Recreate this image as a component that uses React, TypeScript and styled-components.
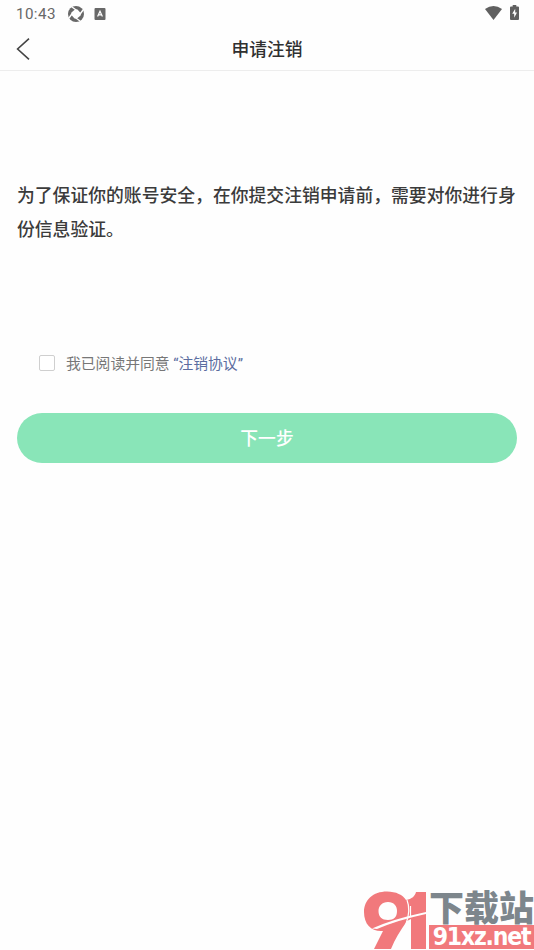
import React from "react";
import styled, { createGlobalStyle } from "styled-components";

const Global = createGlobalStyle`
  * { box-sizing: border-box; }
  body { margin: 0; background: #fefefe; font-family: Roboto, "Noto Sans CJK SC", sans-serif; }
`;
const Screen = styled.main`
  position: relative; display: flex; flex-direction: column;
  width: 534px; height: 950px; overflow: hidden; background: #fefefe;
`;
const StatusBar = styled.header`
  display: flex; align-items: center; height: 27px; padding: 0 15px 0 16px; color: #686868;
`;
const Clock = styled.time`
  width: 52px; font-size: 15.2px; letter-spacing: 0.4px; line-height: 27px; padding-top: 1px;
`;
const StatusIcons = styled.div`
  display: flex; align-items: center; gap: 10px; flex: 1;
`;
const DeviceIcons = styled.div`
  display: flex; align-items: center; gap: 8px; padding-bottom: 2px;
`;
const NavBar = styled.nav`
  display: grid; grid-template-columns: 60px 1fr 60px; align-items: center;
  height: 44px; border-bottom: 1px solid #ededed;
`;
const BackButton = styled.button`
  display: flex; padding: 0 0 0 16px; border: 0; background: none;
`;
const Title = styled.h1`
  margin: 0; padding-top: 2px; text-align: center; font-size: 17.8px; line-height: 26px; font-weight: 500; color: #303030;
`;
const Content = styled.section`
  display: flex; flex-direction: column; padding: 108px 17px 0;
`;
const Notice = styled.p`
  margin: 0; width: 502px; font-size: 17.82px; line-height: 34px; font-weight: 500; color: #3b3b3b;
`;
const Agreement = styled.label`
  display: flex; align-items: center; height: 24px; margin: 103px 0 0 22px;
  font-size: 14.8px; color: #777; white-space: pre;
`;
const Checkbox = styled.input`
  appearance: none; width: 16px; height: 16px; margin: 1px 11px 0 0;
  border: 1px solid #cfcfcf; border-radius: 2px; background: #fff;
`;
const Link = styled.a`color: #5b6da0;`;
const NextButton = styled.button`
  height: 50px; width: 500px; margin-top: 39px; padding: 0 0 2px; border: 0; border-radius: 25px;
  background: #89e5b8; color: #fff; font: 500 17.8px Roboto, "Noto Sans CJK SC", sans-serif;
`;
const Watermark = styled.div`
  position: absolute; left: 360px; top: 886px; display: flex; width: 174px; height: 64px;
`;
const SiteLabel = styled.div`
  display: flex; flex-direction: column; width: 105px; margin-left: 3px;
`;
const SiteName = styled.span`
  height: 39px; padding-top: 2px; white-space: nowrap; color: #7d868c;
  font: 900 35px/35px "Noto Sans CJK SC", sans-serif;
`;
const SiteAddress = styled.span`
  display: flex; align-items: center; justify-content: center; height: 24px;
  background: #f1797c; color: #fff;
  font: 700 24.5px/24px "DejaVu Sans Condensed", "DejaVu Sans", sans-serif;
  font-stretch: condensed; letter-spacing: -1.2px; white-space: nowrap;
`;

export default function App() {
  return (
    <Screen>
      <Global />
      <StatusBar>
        <Clock>10:43</Clock>
        <StatusIcons>
          <svg width="16" height="16" viewBox="0 0 16 16">
            <circle cx="8" cy="8" r="8" fill="#686868" />
            <path d="M7 3.4H9.5L12.6 7V9.5L9 12.6H6.5L3.4 9V6.5Z" fill="#fefefe" />
            <path d="M4 1 8.5 4.2M15 4 11.8 8.5M12 15 7.5 11.8M1 12 4.2 7.5" stroke="#fefefe" strokeWidth="1.4" />
          </svg>
          <svg width="12" height="12" viewBox="0 0 12 12">
            <rect width="11" height="12" x=".5" rx="1" fill="#686868" />
            <path d="M3.6 8.5 6 3.2 8.4 8.5M4.5 6.9H7.5" fill="none" stroke="#fff" strokeWidth="1.2" />
          </svg>
        </StatusIcons>
        <DeviceIcons>
          <svg width="17" height="14" viewBox="0 0 17 14"><path d="M0 3Q8.5-3 17 3L8.5 14Z" fill="#606060" /></svg>
          <svg width="9" height="15" viewBox="0 0 9 15">
            <path d="M2.7 0H6.3V1.6H8Q9 1.6 9 2.6V14Q9 15 8 15H1Q0 15 0 14V2.6Q0 1.6 1 1.6H2.7Z" fill="#606060" />
            <path d="M5.2 3.7 2.2 8.8H4.2V12.8L7 7.4H5.2Z" fill="#fff" />
          </svg>
        </DeviceIcons>
      </StatusBar>
      <NavBar>
        <BackButton aria-label="返回">
          <svg width="14" height="22" viewBox="0 0 14 22"><path d="M13 .7 1.6 11 13 21.3" fill="none" stroke="#444" strokeWidth="1.6" /></svg>
        </BackButton>
        <Title>申请注销</Title>
      </NavBar>
      <Content>
        <Notice>为了保证你的账号安全，在你提交注销申请前，需要对你进行身份信息验证。</Notice>
        <Agreement>
          <Checkbox type="checkbox" />
          <span>我已阅读并同意 <Link>“注销协议”</Link></span>
        </Agreement>
        <NextButton>下一步</NextButton>
      </Content>
      <Watermark>
        <svg width="66" height="64" viewBox="0 0 66 64">
          <path fill="#f1797c" fillRule="evenodd" d="M27 5.5C36 5.5 43 9 46 14C52 13 55 10 56 6H66V63H51V33L47 35C40 45 35 53 31 63H14L23 45C12 46 4 39 4 26C4 14 13 5.5 27 5.5ZM28 16C22 16 18.5 20 18.5 25C18.5 31 22 34 28 34C34 34 37 31 37 25C37 20 34 16 28 16Z" />
          <path d="M47 14Q51 24 46 38M50.5 20V30" fill="none" stroke="#fefefe" strokeWidth="1.2" />
          <path d="M12 42.5Q33 33 66 26V28Q38 34 17 43Z" fill="#fefefe" />
        </svg>
        <SiteLabel>
          <SiteName>下载站</SiteName>
          <SiteAddress>91xz.net</SiteAddress>
        </SiteLabel>
      </Watermark>
    </Screen>
  );
}
